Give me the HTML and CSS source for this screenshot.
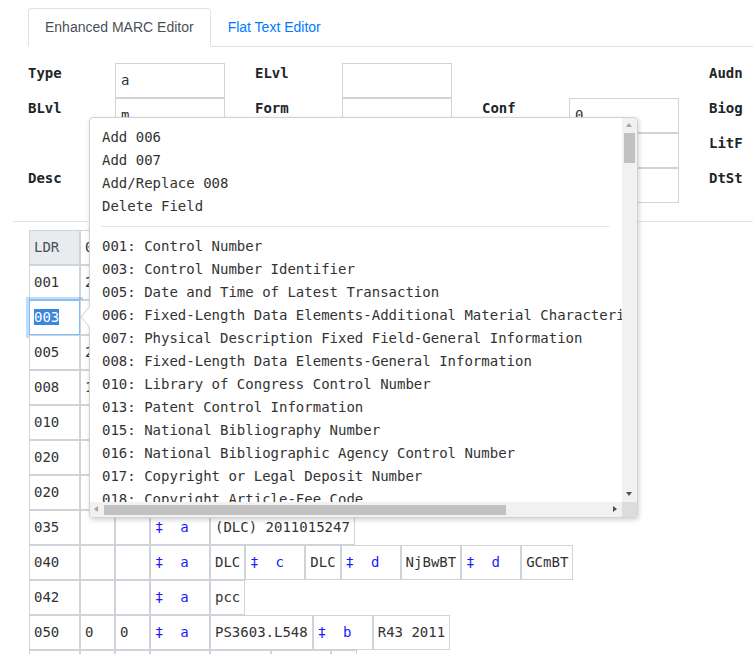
FILE: index.html
```html
<!DOCTYPE html>
<html>
<head>
<meta charset="utf-8">
<link rel="stylesheet" href="styles.css">
</head>
<body>
<div class="page">
  <ul class="tabs">
    <li class="tab active">Enhanced MARC Editor</li>
    <li class="tab link">Flat Text Editor</li>
  </ul>

  <div class="ff">
    <div class="ffcol">
      <div class="fl">Type</div><div class="fb">a</div>
      <div class="fl">BLvl</div><div class="fb">m</div>
      <div class="fl"></div><div class="fb"></div>
      <div class="fl">Desc</div><div class="fb">a</div>
    </div>
    <div class="ffcol">
      <div class="fl">ELvl</div><div class="fb"></div>
      <div class="fl">Form</div><div class="fb"></div>
      <div class="fl">Cont</div><div class="fb"></div>
      <div class="fl">GPub</div><div class="fb"></div>
    </div>
    <div class="ffcol">
      <div class="fl"></div><div class="fe"></div>
      <div class="fl">Conf</div><div class="fb">0</div>
      <div class="fl">Fest</div><div class="fb">0</div>
      <div class="fl">Indx</div><div class="fb">0</div>
    </div>
    <div class="ffcol">
      <div class="fl">Audn</div><div class="fb"></div>
      <div class="fl">Biog</div><div class="fb"></div>
      <div class="fl">LitF</div><div class="fb">1</div>
      <div class="fl">DtSt</div><div class="fb">s</div>
    </div>
  </div>

  <hr class="sep">

  <div class="marc">
    <div class="row"><span class="c tag ldr">LDR</span><span class="c val">00000cam a2200000 a 4500</span></div>
    <div class="row"><span class="c tag">001</span><span class="c val">2011015247</span></div>
    <div class="row"><span class="c tag focus"><span class="sel">003</span></span><span class="c val">DLC</span></div>
    <div class="row"><span class="c tag">005</span><span class="c val">20110512083105.0</span></div>
    <div class="row"><span class="c tag">008</span><span class="c val">110406s2011    nyu      b    000 1 eng</span></div>
    <div class="row"><span class="c tag">010</span><span class="c ind"></span><span class="c ind"></span><span class="c sub"><span class="dg">‡</span>  <span class="code">a</span></span><span class="c val">  2011015247</span></div>
    <div class="row"><span class="c tag">020</span><span class="c ind"></span><span class="c ind"></span><span class="c sub"><span class="dg">‡</span>  <span class="code">a</span></span><span class="c val">9781455540624</span></div>
    <div class="row"><span class="c tag">020</span><span class="c ind"></span><span class="c ind"></span><span class="c sub"><span class="dg">‡</span>  <span class="code">a</span></span><span class="c val">9781455540631</span></div>
    <div class="row"><span class="c tag">035</span><span class="c ind"></span><span class="c ind"></span><span class="c sub"><span class="dg">‡</span>  <span class="code">a</span></span><span class="c val">(DLC) 2011015247</span></div>
    <div class="row"><span class="c tag">040</span><span class="c ind"></span><span class="c ind"></span><span class="c sub"><span class="dg">‡</span>  <span class="code">a</span></span><span class="c val">DLC</span><span class="c sub"><span class="dg">‡</span>  <span class="code">c</span></span><span class="c val">DLC</span><span class="c sub"><span class="dg">‡</span>  <span class="code">d</span></span><span class="c val">NjBwBT</span><span class="c sub"><span class="dg">‡</span>  <span class="code">d</span></span><span class="c val">GCmBT</span></div>
    <div class="row"><span class="c tag">042</span><span class="c ind"></span><span class="c ind"></span><span class="c sub"><span class="dg">‡</span>  <span class="code">a</span></span><span class="c val">pcc</span></div>
    <div class="row"><span class="c tag">050</span><span class="c ind">0</span><span class="c ind">0</span><span class="c sub"><span class="dg">‡</span>  <span class="code">a</span></span><span class="c val">PS3603.L548</span><span class="c sub"><span class="dg">‡</span>  <span class="code">b</span></span><span class="c val">R43 2011</span></div>
    <div class="row"><span class="c tag">082</span><span class="c ind">0</span><span class="c ind">0</span><span class="c sub"><span class="dg">‡</span>  <span class="code">a</span></span><span class="c val">813/.6</span><span class="c sub"><span class="dg">‡</span>  <span class="code">2</span></span><span class="c val">23</span></div>
  </div>
</div>

<svg class="pointer" width="10" height="22" viewBox="0 0 10 22"><path d="M10 0.5 L1 11 L10 21.5" fill="#fff" stroke="#d2d2d2" stroke-width="1"/></svg>

<div class="menu">
  <div class="scroll">
    <div class="items">
      <div class="item">Add 006</div>
      <div class="item">Add 007</div>
      <div class="item">Add/Replace 008</div>
      <div class="item">Delete Field</div>
      <div class="divider"></div>
      <div class="item">001: Control Number</div>
      <div class="item">003: Control Number Identifier</div>
      <div class="item">005: Date and Time of Latest Transaction</div>
      <div class="item">006: Fixed-Length Data Elements-Additional Material Characteristics</div>
      <div class="item">007: Physical Description Fixed Field-General Information</div>
      <div class="item">008: Fixed-Length Data Elements-General Information</div>
      <div class="item">010: Library of Congress Control Number</div>
      <div class="item">013: Patent Control Information</div>
      <div class="item">015: National Bibliography Number</div>
      <div class="item">016: National Bibliographic Agency Control Number</div>
      <div class="item">017: Copyright or Legal Deposit Number</div>
      <div class="item">018: Copyright Article-Fee Code</div>
      <div class="item">020: International Standard Book Number</div>
    </div>
  </div>
  <div class="vbar">
    <span class="arr up"></span>
    <span class="vthumb"></span>
    <span class="arr down"></span>
  </div>
  <div class="hbar">
    <span class="arr left"></span>
    <span class="hthumb"></span>
    <span class="arr right"></span>
  </div>
  <div class="corner"></div>
</div>
</body>
</html>
```

FILE: styles.css
```css
html, body {
  margin: 0;
  padding: 0;
}
body {
  font-family: "Liberation Sans", Arial, sans-serif;
  color: #212529;
  background: #fff;
  width: 753px;
  height: 654px;
  overflow: hidden;
  position: relative;
}
.page {
  padding-top: 8px;
}
.tabs {
  display: flex;
  list-style: none;
  margin: 0 0 0 28px;
  padding: 0;
  border-bottom: 1px solid #dee2e6;
}
.tab {
  font-size: 14px;
  line-height: 21px;
  padding: 8px 16px;
  border: 1px solid transparent;
  border-radius: 4px 4px 0 0;
  margin-bottom: -1px;
}
.tab.active {
  color: #495057;
  border-color: #dee2e6 #dee2e6 #fff;
  background: #fff;
}
.tab.link {
  color: #007bff;
}

.ff {
  display: flex;
  gap: 30px;
  margin: 16px 0 0 28px;
  font-family: "DejaVu Sans Mono", monospace;
  font-size: 14px;
}
.ffcol {
  flex: none;
  display: grid;
  grid-template-columns: 87px 110px;
  grid-auto-rows: 35px;
}
.fl {
  font-weight: bold;
  line-height: 20px;
  color: #212529;
}
.fb {
  box-sizing: border-box;
  border: 1px solid #ced4da;
  padding: 0 5px;
  line-height: 33px;
  color: #333;
  background: #fff;
}
.fe {
  height: 35px;
}

.sep {
  margin: 18px 0 8px 13px;
  border: 0;
  border-top: 1px solid #e3e3e3;
  height: 0;
}

.marc {
  margin-left: 29px;
  font-family: "DejaVu Sans Mono", monospace;
  font-size: 14px;
}
.row {
  display: flex;
}
.c {
  flex: none;
  box-sizing: border-box;
  height: 35px;
  line-height: 33px;
  border: 1px solid #ced4da;
  padding: 0 4px;
  white-space: pre;
  background: #fff;
  color: #333;
}
.tag { width: 51px; }
.ind { width: 35px; }
.sub { width: 60px; }
.ldr {
  background: #e9ecef;
  color: #495057;
}
.focus {
  border-color: #80bdff;
  box-shadow: 0 0 0 3px rgba(0, 123, 255, 0.25);
}
.sel {
  background: #3a86e0;
  color: #fff;
}
.dg, .code {
  color: #1a1aff;
}

.pointer {
  position: absolute;
  left: 80px;
  top: 306px;
  z-index: 3;
}
.menu {
  position: absolute;
  left: 89px;
  top: 117px;
  width: 549px;
  height: 401px;
  box-sizing: border-box;
  border: 1px solid #d2d2d2;
  border-radius: 4px;
  background: #fff;
  box-shadow: 1px 2px 5px rgba(0, 0, 0, 0.18);
  display: grid;
  grid-template-columns: 532px 15px;
  grid-template-rows: 384px 15px;
  overflow: hidden;
  z-index: 2;
}
.scroll {
  overflow: hidden;
  position: relative;
}
.items {
  padding: 8px 12px 0 12px;
  font-family: "DejaVu Sans Mono", monospace;
  font-size: 14px;
  color: #333;
}
.item {
  height: 23px;
  line-height: 23px;
  white-space: pre;
}
.divider {
  height: 1px;
  background: #e6e6e6;
  margin: 8px 0 8px -1px;
}
.vbar {
  background: #f1f1f1;
  position: relative;
}
.hbar {
  background: #f1f1f1;
  position: relative;
}
.corner {
  background: #dcdcdc;
}
.vthumb {
  position: absolute;
  left: 2px;
  right: 2px;
  top: 15px;
  height: 30px;
  background: #c1c1c1;
}
.hthumb {
  position: absolute;
  top: 3px;
  bottom: 2px;
  left: 14px;
  width: 402px;
  background: #c1c1c1;
}
.arr {
  position: absolute;
  width: 0;
  height: 0;
  border-style: solid;
  border-color: transparent;
}
.arr.up {
  left: 4px;
  top: 5px;
  border-width: 0 3.5px 4px 3.5px;
  border-bottom-color: #a3a3a3;
}
.arr.down {
  left: 4px;
  bottom: 6px;
  border-width: 4px 3.5px 0 3.5px;
  border-top-color: #505050;
}
.arr.left {
  left: 4px;
  top: 4px;
  border-width: 3.5px 4px 3.5px 0;
  border-right-color: #a3a3a3;
}
.arr.right {
  right: 5px;
  top: 4px;
  border-width: 3.5px 0 3.5px 4px;
  border-left-color: #505050;
}
```
